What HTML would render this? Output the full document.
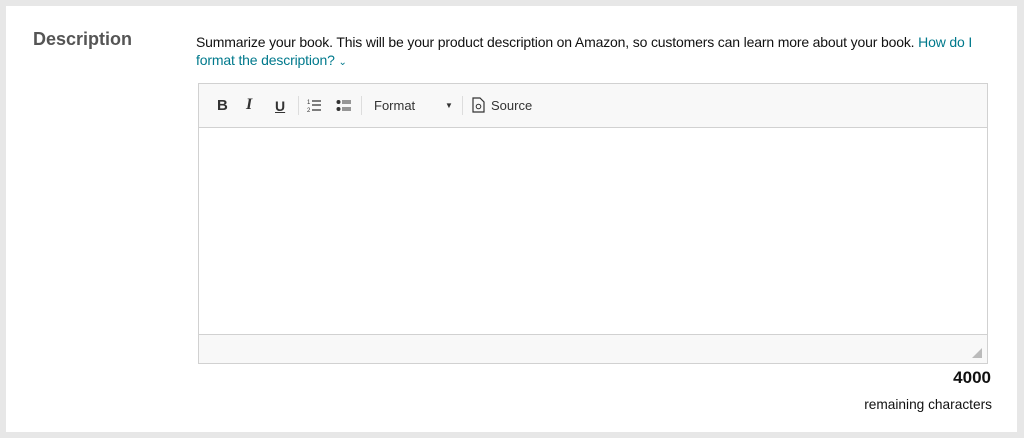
<!DOCTYPE html>
<html><head><style>
body{margin:0;width:1024px;height:438px;background:#e7e7e7;font-family:"Liberation Sans",Arial,sans-serif;overflow:hidden;position:relative}
.panel{position:absolute;left:6px;top:6px;width:1011px;height:426px;background:#fff}
.lbl{position:absolute;left:33px;top:29px;font-size:18px;font-weight:bold;color:#555}
.desc{position:absolute;left:196px;top:33px;width:800px;font-size:14px;line-height:18px;color:#111;letter-spacing:-0.16px}
.desc a{color:#00798c;text-decoration:none}
.ed{position:absolute;left:198px;top:83px;width:788px;height:279px;border:1px solid #d1d1d1}
.tb{height:43px;background:#f8f8f8;border-bottom:1px solid #d1d1d1;position:relative;font-size:13px;color:#333}
.tb span{position:absolute;top:14px}
.sep{position:absolute;top:12px;width:1px;height:19px;background:#ddd}
.ft{position:absolute;left:0;right:0;bottom:0;height:28px;background:#f8f8f8;border-top:1px solid #d1d1d1}
.num{position:absolute;right:33px;top:368px;font-size:17px;font-weight:bold;color:#111}
.rem{position:absolute;right:32px;top:397px;font-size:13.7px;color:#111}
</style></head><body>
<div class="panel"></div>
<div class="lbl">Description</div>
<div class="desc">Summarize your book. This will be your product description on Amazon, so customers can learn more about your book. <a>How do I format the description? <span style="font-size:10px">&#8964;</span></a></div>
<div class="ed">
<div class="tb">
<span style="left:18px;font-weight:bold;font-size:15px;top:13px">B</span>
<span style="left:47px;font-style:italic;font-weight:bold;font-family:'Liberation Serif',serif;font-size:16px;top:12px">I</span>
<span style="left:76px;font-weight:bold;text-decoration:underline;font-size:14px">U</span>
<div class="sep" style="left:99px"></div>
<svg style="position:absolute;left:108px;top:14px" width="16" height="15"><text x="0" y="6" font-size="6" fill="#333">1</text><text x="0" y="14" font-size="6" fill="#333">2</text><path d="M5 3h9M5 7h9M5 12h9" stroke="#333" stroke-width="1.3"/></svg>
<svg style="position:absolute;left:137px;top:14px" width="16" height="15"><circle cx="2.5" cy="4" r="2" fill="#333"/><circle cx="2.5" cy="11" r="2" fill="#333"/><path d="M6 3h9M6 5h9M6 10h9M6 12h9" stroke="#333" stroke-width="1"/></svg>
<div class="sep" style="left:162px"></div>
<span style="left:175px">Format</span>
<span style="left:246px;font-size:8px;top:17px">&#9660;</span>
<div class="sep" style="left:263px"></div>
<svg style="position:absolute;left:273px;top:13px" width="13" height="16"><path d="M1 1h7l4 4v10H1z" fill="none" stroke="#333" stroke-width="1.2"/><circle cx="6.5" cy="9.5" r="2.3" fill="none" stroke="#333"/></svg>
<span style="left:292px">Source</span>
</div>
<div class="ft"><svg style="position:absolute;right:5px;bottom:5px" width="10" height="10"><path d="M10 0V10H0z" fill="#bbb"/></svg></div>
</div>
<div class="num">4000</div>
<div class="rem">remaining characters</div>
</body></html>
